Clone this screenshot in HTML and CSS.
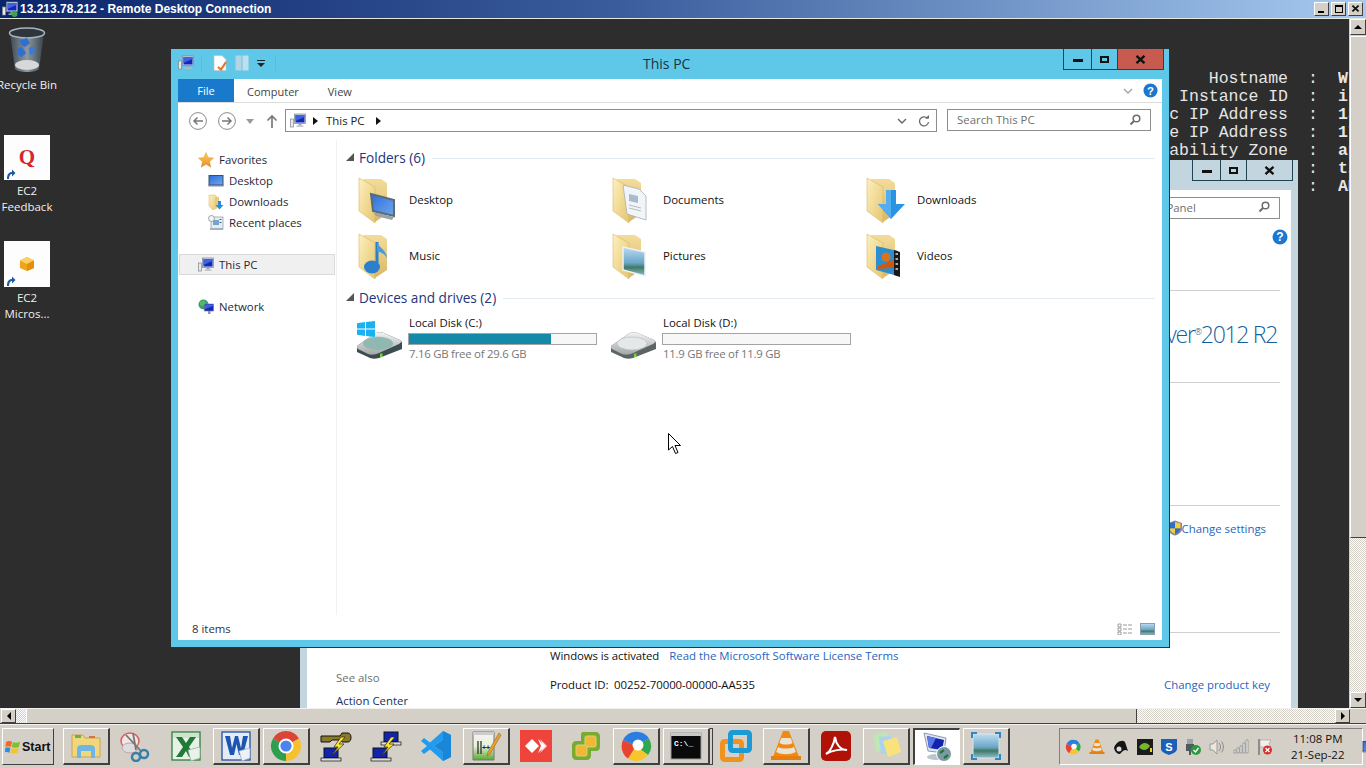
FILE: index.html
```html
<!DOCTYPE html>
<html lang="en">
<head>
<meta charset="utf-8">
<title>13.213.78.212 - Remote Desktop Connection</title>
<link rel="stylesheet" href="styles.css">
</head>
<body>
<svg class="defs" width="0" height="0" aria-hidden="true">
  <defs>
    <linearGradient id="gFlap" x1="0" y1="0" x2="1" y2="1"><stop offset="0" stop-color="#fdf0bd"/><stop offset="1" stop-color="#e6c56f"/></linearGradient>
    <linearGradient id="gBack" x1="0" y1="0" x2="0" y2="1"><stop offset="0" stop-color="#f3dc9b"/><stop offset="1" stop-color="#d9b867"/></linearGradient>
    <linearGradient id="gScreen" x1="0" y1="0" x2="1" y2="1"><stop offset="0" stop-color="#2d6fd8"/><stop offset="1" stop-color="#6ea6ee"/></linearGradient>
    <linearGradient id="gStar" x1="0" y1="0" x2="0" y2="1"><stop offset="0" stop-color="#fbd35d"/><stop offset="1" stop-color="#ec8a22"/></linearGradient>
    <linearGradient id="gBin" x1="0" y1="0" x2="1" y2="0"><stop offset="0" stop-color="#3f4a54"/><stop offset=".5" stop-color="#8c98a2"/><stop offset="1" stop-color="#39424a"/></linearGradient>
    <linearGradient id="gDisk" x1="0" y1="0" x2="0" y2="1"><stop offset="0" stop-color="#f2f4f4"/><stop offset="1" stop-color="#a2a8a8"/></linearGradient>
    <linearGradient id="gPic" x1="0" y1="0" x2="0" y2="1"><stop offset="0" stop-color="#bcdcf2"/><stop offset=".55" stop-color="#6aa7c8"/><stop offset=".7" stop-color="#3f7a62"/><stop offset="1" stop-color="#8fc0d8"/></linearGradient>
    <linearGradient id="gNpp" x1="0" y1="0" x2="0" y2="1"><stop offset="0" stop-color="#f4f4f4"/><stop offset=".5" stop-color="#e8f0d8"/><stop offset="1" stop-color="#58a82e"/></linearGradient>

    <symbol id="x-mark" viewBox="0 0 11 9"><path d="M1.500 .8L9.500 8.200M9.500 .8L1.500 8.200" stroke="#111" stroke-width="2.300" fill="none"/></symbol>

    <symbol id="folder" viewBox="0 0 48 48">
      <path d="M8 3H26L32 7V38L20 46Z" fill="url(#gBack)"/>
      <path d="M4 2L20 11V47L4 35Z" fill="url(#gFlap)" stroke="#d8b865" stroke-width=".6"/>
    </symbol>

    <symbol id="pc" viewBox="0 0 16 16">
      <rect x=".5" y="6" width="3" height="8" fill="#e8e8e8" stroke="#7d8790" stroke-width=".7"/>
      <rect x="4.5" y="1" width="11" height="9.5" fill="#d4dce8" stroke="#75839a" stroke-width=".7"/>
      <rect x="5.5" y="2" width="9" height="7.5" fill="#1427b8"/>
      <path d="M5.5 2H14.5V4L5.5 8Z" fill="#3f63e0"/>
      <rect x="8.5" y="10.5" width="3" height="2" fill="#9aa4ae"/>
      <rect x="6.5" y="12.5" width="7" height="1.3" fill="#b6bec6"/>
    </symbol>

    <symbol id="star" viewBox="0 0 16 16"><path d="M8 .5L10.2 5.6L15.6 6.1L11.5 9.7L12.8 15.2L8 12.3L3.2 15.2L4.5 9.7L.4 6.1L5.8 5.6Z" fill="url(#gStar)" stroke="#d98a2a" stroke-width=".4"/></symbol>

    <symbol id="monitor" viewBox="0 0 16 16"><rect x=".5" y="2" width="15" height="11" fill="#3a4e6a"/><rect x="1.5" y="3" width="13" height="8.5" fill="url(#gScreen)"/><rect x=".5" y="12" width="15" height="1.5" fill="#7e8a98"/></symbol>

    <symbol id="dl16" viewBox="0 0 16 16"><path d="M1 1H7L9 3V14L5 16L1 12Z" fill="url(#gFlap)" stroke="#d8b865" stroke-width=".5"/><path d="M7 3H11V13H7Z" fill="#e3c983"/><path d="M10 7H13V11H15.5L11.5 15.5L7.5 11H10Z" fill="#2a8bdc"/></symbol>

    <symbol id="recent" viewBox="0 0 16 16"><rect x="3" y="2" width="12" height="12" fill="#e6edf2" stroke="#8898a4" stroke-width=".7"/><rect x="5" y="5" width="6" height="5" fill="#72a5c8"/><rect x="11.5" y="4" width="2" height="1" fill="#48668a"/><rect x="11.5" y="7" width="2" height="1" fill="#48668a"/><rect x="2" y="13" width="13" height="2" fill="#a8b0b8"/><circle cx="3.5" cy="3.5" r="3" fill="#f4f4f4" stroke="#77848e" stroke-width=".7"/></symbol>

    <symbol id="network" viewBox="0 0 16 16"><circle cx="5.5" cy="5.5" r="5" fill="#2f9e8c"/><path d="M2 3L6 1.5L8 4L5 7L2 6Z" fill="#63b84e"/><rect x="6.5" y="5" width="9" height="7" fill="#1427b8" stroke="#778" stroke-width=".6"/><path d="M7 5.5H15V7L7 10Z" fill="#3f63e0"/><rect x="10" y="12" width="2.5" height="3" fill="#8c98a4"/></symbol>

    <symbol id="disk" viewBox="0 0 48 30">
      <path d="M2 17L19 5C22 3 26 3 29 4L45 11C47 12 47 14 47 16V20L24 29C20 30 16 30 13 28L2 23Z" fill="#5e6466"/>
      <path d="M2 17L19 5C22 3 26 3 29 4L45 11C47 12 46 14 44 15L24 24C20 26 16 26 13 25L3 20C2 19 2 18 2 17Z" fill="url(#gDisk)"/>
      <ellipse cx="23" cy="14.5" rx="15" ry="6.500" fill="#e4e8e8" stroke="#b4baba" stroke-width=".6"/>
      <rect x="25" y="24.500" width="2.500" height="3.500" fill="#78d23c"/>
    </symbol>
    <symbol id="disk-c" viewBox="0 0 48 30">
      <path d="M2 17L19 5C22 3 26 3 29 4L45 11C47 12 47 14 47 16V20L24 29C20 30 16 30 13 28L2 23Z" fill="#3c4c50"/>
      <path d="M2 17L19 5C22 3 26 3 29 4L45 11C47 12 46 14 44 15L24 24C20 26 16 26 13 25L3 20C2 19 2 18 2 17Z" fill="url(#gDisk)"/>
      <ellipse cx="23" cy="14.5" rx="15" ry="6.500" fill="#8fb8b0" stroke="#a8b4b0" stroke-width=".6"/>
      <rect x="25" y="24.500" width="2.500" height="3.500" fill="#78d23c"/>
    </symbol>

    <symbol id="flag" viewBox="0 0 18 18"><path d="M1 4C3 2 5 2 8 3L6.5 9C4 8 2.5 8 .5 9Z" fill="#ef6a2a"/><path d="M9 3.5C11 4.5 14 4.5 17 3L15.5 9C13 10 10 10 7.5 9Z" fill="#7cc12e"/><path d="M.3 10C2 9 4 9 6 10L5 15.5C3 14.5 1 14.5 0 15Z" fill="#2a8fe0"/><path d="M7 10C10 11 13 11 15.3 10L14 15.5C11 16.5 8 16.5 6 15.8Z" fill="#f5c32c"/></symbol>

    <symbol id="excel" viewBox="0 0 32 32"><rect x="2" y="2" width="28" height="28" fill="#e6f2e6" stroke="#2f7d3f" stroke-width="1.3"/><rect x="3" y="3" width="26" height="5" fill="#cfe4cf"/><path d="M6 7H12L16 13L20 7H26L19 17L25 27H19L16 21L12 27H6L13 17Z" fill="#1f7a35"/><path d="M18 20L30 17V28L21 31Z" fill="#e8f2ea" stroke="#89ad90" stroke-width=".7"/></symbol>
    <symbol id="word" viewBox="0 0 32 32"><rect x="2" y="2" width="28" height="28" fill="#e4ecf8" stroke="#25509e" stroke-width="1.3"/><path d="M5 6H10L12 18L15 6H18L21 18L23 6H28L23 25H19L16.5 14L14 25H10Z" fill="#1d56b0"/><path d="M19 21L30 18V28L22 31Z" fill="#eef2f8" stroke="#8ea2c4" stroke-width=".7"/></symbol>
    <symbol id="chrome" viewBox="0 0 32 32"><path d="M16 16L3 8.5A15 15 0 0 1 29 8.5Z" fill="#db4437"/><path d="M16 16L29 8.5A15 15 0 0 1 16 31Z" fill="#f6c02e"/><path d="M16 16L16 31A15 15 0 0 1 3 8.5Z" fill="#2f9e4f"/><circle cx="16" cy="16" r="7.5" fill="#fff"/><circle cx="16" cy="16" r="5.6" fill="#4a84ec"/></symbol>
    <symbol id="ring" viewBox="0 0 32 32"><path d="M16 16L3 10A15 15 0 0 1 29 8.5Z" fill="#2a7de1"/><path d="M16 16L29 8.5A15 15 0 0 1 28 25Z" fill="#2fa84f"/><path d="M16 16L28 25A15 15 0 0 1 8 28.5Z" fill="#f7c52c"/><path d="M16 16L8 28.5A15 15 0 0 1 3 10Z" fill="#e8432f"/><circle cx="18" cy="15" r="5.500" fill="#fff"/></symbol>
    <symbol id="vscode" viewBox="0 0 32 32"><path fill-rule="evenodd" d="M23 1L31 5V27L23 31L10 19.5L4 24L1 21L7 16L1 11L4 8L10 12.5ZM23 9.5L14 16L23 22.5Z" fill="#1f9cf0"/><path d="M23 1V9.5L14 16L23 22.5V31L31 27V5Z" fill="#1a86d8"/></symbol>
    <symbol id="anydesk" viewBox="0 0 32 32"><rect width="32" height="32" fill="#ef443b"/><path d="M12 9L19 16L12 23L5 16Z" fill="#fff"/><path d="M18 9L25 16L18 23L21 16Z" fill="#fff"/><path d="M20 9L27 16L20 23L23.5 16Z" fill="#fff" opacity=".85"/></symbol>
    <symbol id="vsphere" viewBox="0 0 32 32"><path d="M13 2H26C28 2 30 4 30 6V17C30 20 28 21 26 21H21V26C21 28 19 30 17 30H6C4 30 2 28 2 26V15C2 13 4 11 6 11H11V6C11 4 11 2 13 2Z" fill="#7bab2e"/><rect x="15" y="6" width="11" height="11" rx="1.5" fill="#f2b632" stroke="#c2d98a"/><rect x="6" y="15" width="11" height="11" rx="1.5" fill="#f2b632" stroke="#c2d98a"/></symbol>
    <symbol id="vmware" viewBox="0 0 32 32"><rect x="2.5" y="11.5" width="19" height="18" rx="2" fill="none" stroke="#f0921e" stroke-width="5"/><rect x="10.5" y="2.5" width="19" height="18" rx="2" fill="none" stroke="#1b9ad6" stroke-width="5"/></symbol>
    <symbol id="vlc" viewBox="0 0 32 32"><path d="M13 1H19L29 27H3Z" fill="#f08a12"/><path d="M11.2 8H20.8L22.5 13C19 15 13 15 9.5 13Z" fill="#e8e4dc"/><path d="M8 17C12 19 20 19 24 17L25.8 22C20 25 12 25 6.200 22Z" fill="#e8e4dc"/><path d="M1 26H31V30H1Z" fill="#e87f0c"/></symbol>
    <symbol id="acrobat" viewBox="0 0 32 32"><rect x="1" y="1" width="30" height="30" rx="5" fill="#b11207"/><path d="M6 24C10 22 14 14 15 7C16 14 20 20 27 20C22 19 12 20 6 24Z" fill="none" stroke="#fff" stroke-width="2"/></symbol>
    <symbol id="sticky" viewBox="0 0 32 32"><path d="M3 5L17 2L19 20L6 22Z" fill="#bfe6b5"/><path d="M9 7L21 6L22 24L11 24Z" fill="#a9d3f0"/><path d="M13 11L27 7L31 22L18 27Z" fill="#f9e27c"/></symbol>
    <symbol id="rdp" viewBox="0 0 32 32"><path d="M3 2L25 7L23 22L7 20Z" fill="#dfe6f0" stroke="#7485a0" stroke-width=".8"/><path d="M6 5L23 9L21 19L8 17Z" fill="#1024b0"/><path d="M6 5L15 7L10 17L8 17Z" fill="#5a78e6"/><ellipse cx="15" cy="26" rx="9" ry="3" fill="#bcc4cc"/><circle cx="23" cy="23" r="7.500" fill="#7d9aa4" stroke="#fff"/><path d="M19 22L23 19M27 24L23 27" stroke="#1f7a35" stroke-width="2.200"/></symbol>
    <symbol id="photos" viewBox="0 0 32 32"><rect x="3" y="4" width="26" height="24" fill="url(#gPic)" stroke="#d9e4ec"/><path d="M1 2H7V4H3V8H1ZM31 2H25V4H29V8H31ZM1 30H7V28H3V24H1ZM31 30H25V28H29V24H31Z" fill="#2e86c4"/></symbol>
    <symbol id="shield" viewBox="0 0 16 16"><path d="M8 .5L15 3V9C15 12 11 15 8 15.500C5 15 1 12 1 9V3Z" fill="#7f8a94"/><path d="M8 2V8.500H2.500V3.500Z" fill="#2b6fc8"/><path d="M8 2L13.500 3.500V8.500H8Z" fill="#f6cd3a"/><path d="M2.500 8.500H8V14C5 13 3 11 2.500 8.500Z" fill="#f6cd3a"/><path d="M8 8.500H13.500C13 11 11 13 8 14Z" fill="#2b6fc8"/></symbol>
    <symbol id="search" viewBox="0 0 12 12"><circle cx="7.500" cy="4.500" r="3.300" fill="none" stroke="#6d6d6d" stroke-width="1.500"/><path d="M5 7L1.500 10.500" stroke="#6d6d6d" stroke-width="2"/></symbol>
    <symbol id="help" viewBox="0 0 16 16"><circle cx="8" cy="8" r="7.500" fill="#1b77cf"/><text x="8" y="12.300" text-anchor="middle" class="help-mark">?</text></symbol>
  </defs>
</svg>

<header class="rdp-title">
  <svg class="i16" viewBox="0 0 16 16"><use href="#pc"/><circle cx="12.500" cy="13" r="3" fill="#3ba34a"/></svg>
  <span class="rdp-title-text">13.213.78.212 - Remote Desktop Connection</span>
  <div class="rdp-controls">
    <button class="classic-btn"><span class="g-min"></span></button>
    <button class="classic-btn"><span class="g-restore"></span></button>
    <button class="classic-btn"><svg class="x-sm" viewBox="0 0 11 9"><use href="#x-mark"/></svg></button>
  </div>
</header>

<div class="work">
  <main class="viewport">
    <section class="bginfo">
      <div class="bg-label">Hostname</div><div class="bg-colon">:</div><div class="bg-value">WIN-3</div>
      <div class="bg-label">Instance ID</div><div class="bg-colon">:</div><div class="bg-value">i-0a</div>
      <div class="bg-label">Public IP Address</div><div class="bg-colon">:</div><div class="bg-value">13.2</div>
      <div class="bg-label">Private IP Address</div><div class="bg-colon">:</div><div class="bg-value">172.</div>
      <div class="bg-label">Availability Zone</div><div class="bg-colon">:</div><div class="bg-value">ap-s</div>
      <div class="bg-label"></div><div class="bg-colon">:</div><div class="bg-value">t2.m</div>
      <div class="bg-label"></div><div class="bg-colon">:</div><div class="bg-value">AMD64</div>
    </section>

    <div class="desk-icon at-bin">
      <svg class="bin" viewBox="0 0 38 46"><path d="M2 6L7 42C10 46 28 46 31 42L36 6Z" fill="url(#gBin)"/><ellipse cx="19" cy="6" rx="17.500" ry="5" fill="#2e363d" stroke="#aab4bc" stroke-width="1.500"/><path d="M12 13L19 11L22 16L17 20L13 18Z" fill="#2f6fd0"/><path d="M9 22L14 20L18 26L14 30L10 28Z" fill="#2f6fd0"/><path d="M21 21L26 19L27 26L22 28Z" fill="#3a7ad8"/><ellipse cx="19" cy="38" rx="12" ry="5" fill="#d6d8da"/></svg>
      <span>Recycle Bin</span>
    </div>
    <div class="desk-icon at-feedback">
      <div class="tile short"><span class="q-mark">Q</span><svg class="shortcut" viewBox="0 0 12 12"><rect width="12" height="12" fill="#fff"/><path d="M3 11C3 6 5 4 8 4V1.500L11.500 5L8 8.500V6C6 6 5 8 5 11Z" fill="#1c5aa8"/></svg></div>
      <span>EC2<br>Feedback</span>
    </div>
    <div class="desk-icon at-micros">
      <div class="tile"><svg class="cube" viewBox="0 0 16 16"><path d="M8 1L15 4.500V12L8 15L1 12V4.500Z" fill="#f0a41c"/><path d="M1 4.500L8 8L15 4.500L8 1Z" fill="#fbd064"/><path d="M8 8V15L15 12V4.500Z" fill="#e58e10"/></svg><svg class="shortcut" viewBox="0 0 12 12"><rect width="12" height="12" fill="#fff"/><path d="M3 11C3 6 5 4 8 4V1.500L11.500 5L8 8.500V6C6 6 5 8 5 11Z" fill="#1c5aa8"/></svg></div>
      <span>EC2<br>Micros...</span>
    </div>

    <article class="win-back">
      <div class="back-title">
        <div class="win-ctl dim"><button class="ctl-min"><span class="g-min-lg"></span></button><button class="ctl-max"><span class="g-max-lg"></span></button><button class="ctl-close"><svg class="x-lg" viewBox="0 0 11 9"><use href="#x-mark"/></svg></button></div>
      </div>
      <div class="back-client">
        <aside class="back-side">
          <div class="see-also">See also</div>
          <div class="action">Action Center</div>
        </aside>
        <div class="back-main">
          <div class="back-sec s1">
            <div class="back-search"><span class="ghost">Search Control Panel</span><svg class="i12" viewBox="0 0 12 12"><use href="#search"/></svg></div>
            <svg class="help-back" viewBox="0 0 16 16"><use href="#help"/></svg>
          </div>
          <div class="back-sec s2"><span class="ws-logo">Windows Server<sup>&reg;</sup>2012 R2</span></div>
          <div class="back-sec s3"></div>
          <div class="back-sec s4">
            <div class="settings"><svg class="i16" viewBox="0 0 16 16"><use href="#shield"/></svg><a class="link">Change settings</a></div>
          </div>
          <div class="back-sec s5">
            <div class="act-row"><span class="act-text">Windows is activated</span><a class="link">Read the Microsoft Software License Terms</a></div>
            <div class="act-row2"><span class="act-text">Product ID:&nbsp; 00252-70000-00000-AA535</span><a class="link">Change product key</a></div>
          </div>
        </div>
      </div>
    </article>

    <article class="win-front">
      <div class="front-title">
        <div class="qat">
          <svg class="i16" viewBox="0 0 16 16"><use href="#pc"/></svg>
          <i class="qsep first"></i>
          <svg class="q-note" viewBox="0 0 14 16"><path d="M1 .5H9L13 4.500V15.500H1Z" fill="#fff" stroke="#b8c2c8" stroke-width=".7"/><path d="M5 12L8 14.500L13 7" fill="none" stroke="#e57230" stroke-width="2.200"/></svg>
          <svg class="q-pane" viewBox="0 0 14 16"><rect x=".5" y=".5" width="6" height="15" fill="#cfd9e4"/><rect x="7.500" y=".5" width="6" height="15" fill="#dfe7ee"/></svg>
          <svg class="q-drop" viewBox="0 0 8 7"><rect width="8" height="1" fill="#222"/><path d="M0 3H8L4 7Z" fill="#222"/></svg>
          <i class="qsep last"></i>
        </div>
        <div class="front-caption">This PC</div>
        <div class="win-ctl"><button class="ctl-min"><span class="g-min-lg"></span></button><button class="ctl-max"><span class="g-max-lg"></span></button><button class="ctl-close red"><svg class="x-lg" viewBox="0 0 11 9"><use href="#x-mark"/></svg></button></div>
      </div>

      <div class="front-client">
        <nav class="ribbon">
          <div class="tab-file">File</div>
          <div class="tab">Computer</div>
          <div class="tab view">View</div>
          <svg class="chev" viewBox="0 0 10 6"><path d="M1 1L5 5L9 1" fill="none" stroke="#a8a8a8" stroke-width="1.500"/></svg>
          <svg class="help-icon" viewBox="0 0 16 16"><use href="#help"/></svg>
        </nav>

        <div class="addr-row">
          <svg class="nav-circle" viewBox="0 0 18 18"><circle cx="9" cy="9" r="8.400" fill="none" stroke="#8a8a8a"/><path d="M14 9H5M8.500 5.500L5 9L8.500 12.500" fill="none" stroke="#777" stroke-width="1.500"/></svg>
          <svg class="nav-circle next" viewBox="0 0 18 18"><circle cx="9" cy="9" r="8.400" fill="none" stroke="#8a8a8a"/><path d="M4 9H13M9.500 5.500L13 9L9.500 12.500" fill="none" stroke="#777" stroke-width="1.500"/></svg>
          <svg class="nav-drop" viewBox="0 0 8 5"><path d="M0 0H8L4 5Z" fill="#9a9a9a"/></svg>
          <svg class="nav-up" viewBox="0 0 12 14"><path d="M6 14V2M1.500 6.500L6 2L10.500 6.500" fill="none" stroke="#7a7a7a" stroke-width="1.700"/></svg>
          <div class="addr">
            <svg class="i16" viewBox="0 0 16 16"><use href="#pc"/></svg>
            <svg class="crumb" viewBox="0 0 5 8"><path d="M0 0L5 4L0 8Z" fill="#111"/></svg>
            <span class="addr-text">This PC</span>
            <svg class="crumb" viewBox="0 0 5 8"><path d="M0 0L5 4L0 8Z" fill="#111"/></svg>
            <svg class="addr-chev" viewBox="0 0 10 6"><path d="M1 1L5 5L9 1" fill="none" stroke="#666" stroke-width="1.400"/></svg>
            <svg class="addr-refresh" viewBox="0 0 12 12"><path d="M9.500 3.500A4.500 4.500 0 1 0 10.500 7" fill="none" stroke="#6a6a6a" stroke-width="1.300"/><path d="M7 3.500H11V0Z" fill="#6a6a6a"/></svg>
          </div>
          <div class="search"><span class="ghost">Search This PC</span><svg class="i12" viewBox="0 0 12 12"><use href="#search"/></svg></div>
        </div>

        <div class="body">
          <aside class="side">
            <div class="s-row top"><svg class="i16" viewBox="0 0 16 16"><use href="#star"/></svg>Favorites</div>
            <div class="s-row sub"><svg class="i16" viewBox="0 0 16 16"><use href="#monitor"/></svg>Desktop</div>
            <div class="s-row sub"><svg class="i16" viewBox="0 0 16 16"><use href="#dl16"/></svg>Downloads</div>
            <div class="s-row sub"><svg class="i16" viewBox="0 0 16 16"><use href="#recent"/></svg>Recent places</div>
            <div class="s-row top sel"><svg class="i16" viewBox="0 0 16 16"><use href="#pc"/></svg>This PC</div>
            <div class="s-row top spaced"><svg class="i16" viewBox="0 0 16 16"><use href="#network"/></svg>Network</div>
          </aside>

          <section class="content">
            <h2 class="group"><svg class="tri" viewBox="0 0 8 8"><path d="M8 0V8H0Z" fill="#555"/></svg>Folders (6)<i class="rule"></i></h2>
            <div class="tiles">
              <div class="f-tile"><svg class="i48" viewBox="0 0 48 48"><use href="#folder"/><path d="M16 18L39 24V40L18 35Z" fill="url(#gScreen)" stroke="#5c6a74" stroke-width="2"/><path d="M18 36L39 41L37 44L21 40Z" fill="#9aa3aa"/></svg>Desktop</div>
              <div class="f-tile"><svg class="i48" viewBox="0 0 48 48"><use href="#folder"/><path d="M14 9L30 13L37 20V44L18 38Z" fill="#f2f5f8" stroke="#a6aeb6" stroke-width=".8"/><path d="M20 18L29 20V27L20 25Z" fill="#a8bccf"/><path d="M20 29L32 32M20 32L32 35" stroke="#b4bcc4"/></svg>Documents</div>
              <div class="f-tile"><svg class="i48" viewBox="0 0 48 48"><use href="#folder"/><path d="M23 14H33V28H42L28 43L15 28H23Z" fill="#2a93e4"/><path d="M23 14H28V43L15 28H23Z" fill="#52aef0"/></svg>Downloads</div>
              <div class="f-tile"><svg class="i48" viewBox="0 0 48 48"><use href="#folder"/><path d="M22 10V33" stroke="#2a80cc" stroke-width="3"/><path d="M22 10C24 16 32 18 32 27C31 22 26 21 22 19Z" fill="#4a9ade"/><ellipse cx="17" cy="35" rx="8" ry="6.500" fill="#2a80cc"/></svg>Music</div>
              <div class="f-tile"><svg class="i48" viewBox="0 0 48 48"><use href="#folder"/><path d="M14 15L36 20V44L14 38Z" fill="url(#gPic)" stroke="#eef2f4" stroke-width="1.500"/></svg>Pictures</div>
              <div class="f-tile"><svg class="i48" viewBox="0 0 48 48"><use href="#folder"/><path d="M13 14L35 19V44L13 38Z" fill="#2a8ed0"/><path d="M31 18L37 20V45L31 43Z" fill="#17181a"/><path d="M32.500 22H35M32.500 27H35M32.500 32H35M32.500 37H35" stroke="#ddd" stroke-width="1.500"/><circle cx="23" cy="25" r="4.500" fill="#d8721e"/><path d="M15 34L30 28V36L15 37Z" fill="#c85a14"/></svg>Videos</div>
            </div>
            <h2 class="group next"><svg class="tri" viewBox="0 0 8 8"><path d="M8 0V8H0Z" fill="#555"/></svg>Devices and drives (2)<i class="rule"></i></h2>
            <div class="drives">
              <div class="d-tile">
                <div class="d-icon"><svg class="win-logo" viewBox="0 0 18 16"><path d="M0 2.300L8 1V7.500H0ZM9 .9L18 0V7.500H9ZM0 8.500H8V15L0 13.700ZM9 8.500H18V16L9 15Z" fill="#19b2f0"/></svg><svg class="disk" viewBox="0 0 48 30"><use href="#disk-c"/></svg></div>
                <div class="d-info"><div class="d-name">Local Disk (C:)</div><div class="bar"><div class="bar-fill" style="width:76%"></div></div><div class="d-free">7.16 GB free of 29.6 GB</div></div>
              </div>
              <div class="d-tile">
                <div class="d-icon"><svg class="disk" viewBox="0 0 48 30"><use href="#disk"/></svg></div>
                <div class="d-info"><div class="d-name">Local Disk (D:)</div><div class="bar"></div><div class="d-free">11.9 GB free of 11.9 GB</div></div>
              </div>
            </div>
          </section>
        </div>

        <footer class="status">
          <span>8 items</span>
          <svg class="view-list" viewBox="0 0 16 12"><path d="M1 1H4V4H1ZM1 5H4V8H1ZM1 9H4V12H1Z" fill="none" stroke="#8a8a8a" stroke-width=".8"/><path d="M6 2H16M6 6H16M6 10H16" stroke="#9a9a9a" stroke-dasharray="4 1"/></svg>
          <svg class="view-large" viewBox="0 0 15 12"><rect x=".5" y=".5" width="14" height="11" fill="url(#gPic)" stroke="#8aa0b0"/></svg>
        </footer>
      </div>
    </article>

    <svg class="cursor" viewBox="0 0 13 21"><path d="M.5 .5V17L4.500 13.500L7.500 20.500L10 19.500L7 12.500H12.500Z" fill="#fff" stroke="#000"/></svg>
  </main>

  <div class="vbar">
    <div class="sb-btn"><span class="arrow-up"></span></div>
    <div class="vthumb"></div>
    <div class="sb-track"></div>
    <div class="sb-btn"><span class="arrow-down"></span></div>
  </div>
</div>

<div class="hbar">
  <div class="sb-btn h"><span class="arrow-left"></span></div>
  <div class="sb-track fixed"></div>
  <div class="hthumb"></div>
  <div class="sb-track grow"></div>
  <div class="sb-btn h"><span class="arrow-right"></span></div>
  <div class="corner"></div>
</div>

<footer class="taskbar">
  <button class="start"><svg class="i16" viewBox="0 0 18 18"><use href="#flag"/></svg>Start</button>
  <div class="apps">
    <div class="app raised"><svg class="i32" viewBox="0 0 32 32"><path d="M2 5H13L15 8H30V27H2Z" fill="#f0d77e" stroke="#c8a84a"/><rect x="5" y="5" width="6" height="3" fill="#6bb04a"/><rect x="19" y="6" width="6" height="2" fill="#d8704a"/><path d="M7 28V19C7 16 9 15 11 15H21C23 15 25 16 25 19V28H21V21H11V28Z" fill="#6fb6e4"/></svg></div>
    <div class="app"><svg class="i32" viewBox="0 0 32 32"><ellipse cx="10" cy="11" rx="9" ry="8" fill="#f0e6e2" stroke="#d8606a" stroke-width="1.500"/><ellipse cx="10" cy="18" rx="8" ry="5" fill="#ddd" stroke="#c8a0a8"/><path d="M6 5L21 21M13 3L16 20" stroke="#777" stroke-width="1.800"/><circle cx="24" cy="24" r="4" fill="none" stroke="#3a7ea8" stroke-width="2.500"/><circle cx="16" cy="27" r="4" fill="none" stroke="#3a7ea8" stroke-width="2.500"/></svg></div>
    <div class="app"><svg class="i32" viewBox="0 0 32 32"><use href="#excel"/></svg></div>
    <div class="app raised"><svg class="i32" viewBox="0 0 32 32"><use href="#word"/></svg></div>
    <div class="app raised"><svg class="i32" viewBox="0 0 32 32"><use href="#chrome"/></svg></div>
    <div class="app"><svg class="i32" viewBox="0 0 32 32"><path d="M1 6H20L22 3H28C32 3 32 12 28 12H22L20 10H12L10 12H1Z" fill="#8a7a28" stroke="#111"/><rect x="4" y="18" width="14" height="10" fill="#1024b0" stroke="#111"/><rect x="1" y="28" width="20" height="3" fill="#ddd" stroke="#111" stroke-width=".7"/><path d="M21 7L14 17H18L11 26L24 14H19L25 7Z" fill="#ffe92a" stroke="#222" stroke-width=".7"/></svg></div>
    <div class="app"><svg class="i32" viewBox="0 0 32 32"><rect x="14" y="2" width="14" height="10" fill="#1024b0" stroke="#111"/><rect x="11" y="12" width="20" height="3" fill="#ddd" stroke="#111" stroke-width=".7"/><rect x="3" y="18" width="14" height="10" fill="#1024b0" stroke="#111"/><rect x="1" y="28" width="20" height="3" fill="#ddd" stroke="#111" stroke-width=".7"/><path d="M21 7L14 17H18L11 26L24 14H19L25 7Z" fill="#ffe92a" stroke="#222" stroke-width=".7"/></svg></div>
    <div class="app"><svg class="i32" viewBox="0 0 32 32"><use href="#vscode"/></svg></div>
    <div class="app raised"><svg class="i32" viewBox="0 0 32 32"><path d="M3 2H24V30H3Z" fill="url(#gNpp)" stroke="#777"/><path d="M3 2H24V5H3Z" fill="#ccc"/><path d="M8 11V24M11 11V24" stroke="#222" stroke-width="1.200"/><text x="12" y="20" class="npp-mark">++</text><path d="M29 3L31 5L20 24L17 26L18 22Z" fill="#eea02a" stroke="#8a6a20" stroke-width=".6"/></svg></div>
    <div class="app"><svg class="i32" viewBox="0 0 32 32"><use href="#anydesk"/></svg></div>
    <div class="app"><svg class="i32" viewBox="0 0 32 32"><use href="#vsphere"/></svg></div>
    <div class="app raised"><svg class="i32" viewBox="0 0 32 32"><use href="#ring"/></svg></div>
    <div class="app raised stacked"><svg class="i32" viewBox="0 0 32 32"><rect x="1" y="3" width="30" height="26" fill="#0a0a0a" stroke="#999"/><rect x="1" y="3" width="30" height="3" fill="#c8c8c8"/><text x="4" y="16" class="cmd-mark">C:\_</text></svg></div>
    <div class="app"><svg class="i32" viewBox="0 0 32 32"><use href="#vmware"/></svg></div>
    <div class="app raised"><svg class="i32" viewBox="0 0 32 32"><use href="#vlc"/></svg></div>
    <div class="app"><svg class="i32" viewBox="0 0 32 32"><use href="#acrobat"/></svg></div>
    <div class="app raised"><svg class="i32" viewBox="0 0 32 32"><use href="#sticky"/></svg></div>
    <div class="app active"><svg class="i32" viewBox="0 0 32 32"><use href="#rdp"/></svg></div>
    <div class="app raised"><svg class="i32" viewBox="0 0 32 32"><use href="#photos"/></svg></div>
  </div>
  <div class="tray">
    <svg class="i16" viewBox="0 0 32 32"><use href="#ring"/></svg>
    <svg class="i16" viewBox="0 0 32 32"><use href="#vlc"/></svg>
    <svg class="i16" viewBox="0 0 16 16"><path d="M1 9C3 3 9 0 12 3L15 12C11 9 9 13 7 15C4 15 2 13 1 9Z" fill="#151515"/><circle cx="6" cy="10" r="2.500" fill="#ddd"/></svg>
    <svg class="i16" viewBox="0 0 16 16"><rect width="16" height="16" fill="#1b1b1b"/><path d="M2 8C5 3 10 3 13 7C10 12 5 12 2 8Z" fill="#74b72a"/><rect x="13" y="9" width="2" height="4" fill="#f0d030"/></svg>
    <svg class="i16" viewBox="0 0 16 16"><path d="M0 0H16V10C16 13 11 15 8 16C5 15 0 13 0 10Z" fill="#1d5fb8"/><text x="8" y="11.500" text-anchor="middle" class="s-mark">S</text></svg>
    <svg class="i16" viewBox="0 0 16 16"><rect x="2" y="0" width="6" height="5" fill="#9aa4a8"/><rect x="1" y="5" width="8" height="7" fill="#4e5a5e"/><rect x="4" y="12" width="2" height="4" fill="#4e5a5e"/><circle cx="11" cy="11" r="5" fill="#2c9a3c"/><path d="M8.500 11L10.500 13L13.500 9" fill="none" stroke="#fff" stroke-width="1.300"/></svg>
    <svg class="i16" viewBox="0 0 16 16"><path d="M1 5H4L8 1V15L4 11H1Z" fill="#e9e6de" stroke="#8a8a8a" stroke-width=".8"/><path d="M10 4C12 6 12 10 10 12M12.500 2.500C15 5.500 15 10.500 12.500 13.500" fill="none" stroke="#8a8a8a"/></svg>
    <svg class="i16" viewBox="0 0 16 16"><path d="M1 11h2v3H1ZM4 9h2v5H4ZM7 7h2v7H7ZM10 4h2v10h-2ZM13 1h2v13h-2Z" fill="#eee" stroke="#777" stroke-width=".6"/></svg>
    <svg class="i16" viewBox="0 0 16 16"><path d="M2 0V16" stroke="#777" stroke-width="1.500"/><path d="M3 1H14L12 4.500L14 8H3Z" fill="#f2f0ea" stroke="#999" stroke-width=".6"/><circle cx="10.500" cy="11" r="4.500" fill="#d8302a"/><path d="M8.500 9L12.500 13M12.500 9L8.500 13" stroke="#fff" stroke-width="1.300"/></svg>
    <div class="clock"><div>11:08 PM</div><div>21-Sep-22</div></div>
    <svg class="show-desk" viewBox="0 0 16 16"><use href="#monitor"/></svg>
  </div>
</footer>
</body>
</html>
```
FILE: styles.css
```css
* { box-sizing: border-box; }
html, body { margin: 0; padding: 0; }
body {
  width: 1366px; height: 768px; overflow: hidden;
  display: flex; flex-direction: column;
  background: #d4d0c8;
  font-family: "Open Sans", "Noto Sans", sans-serif;
  font-size: 11.4px; color: #111;
}
.defs { position: absolute; }
button { font: inherit; padding: 0; margin: 0; border: 0; background: none; color: inherit; }
svg { display: block; flex: none; }
.i12 { width: 12px; height: 12px; }
.i16 { width: 16px; height: 16px; }
.i32 { width: 32px; height: 32px; }
.i48 { width: 48px; height: 48px; }
.x-sm { width: 9px; height: 7px; }
.x-lg { width: 11px; height: 9px; }
.help-mark { font: bold 12px "Liberation Sans", sans-serif; fill: #fff; }
.npp-mark { font: bold 7px "Liberation Sans", sans-serif; fill: #222; }
.cmd-mark { font: bold 8px "Liberation Mono", monospace; fill: #fff; }
.s-mark { font: bold 11px "Liberation Sans", sans-serif; fill: #fff; }

/* RDP title */
.rdp-title {
  height: 19px; flex: none;
  display: flex; align-items: center;
  padding: 0 3px 1px 2px;
  border-bottom: 1px solid #e8e6e0;
  background: linear-gradient(90deg, #0a246a, #3a5c9c 45%, #a6caf0);
}
.rdp-title-text {
  margin-left: 2px;
  font: bold 12px "Liberation Sans", sans-serif;
  color: #fff;
}
.rdp-controls { margin-left: auto; display: flex; gap: 2px; }
.classic-btn {
  width: 15px; height: 14px;
  background: #d4d0c8;
  border: 1px solid; border-color: #fff #404040 #404040 #fff;
  display: flex; align-items: center; justify-content: center;
  color: #000;
}
.g-min { width: 6px; height: 2px; background: #000; margin-top: 7px; margin-right: 2px; }
.g-restore { width: 8px; height: 8px; border: 1px solid #000; border-top-width: 2px; }

/* workspace */
.work { flex: 1; display: flex; min-height: 0; }
.viewport {
  width: 1349px; position: relative; overflow: hidden;
  background: #2d2d2d;
}
.vbar { flex: 1; display: flex; flex-direction: column; padding-left: 1px; background: #d4d0c8; }
.sb-btn {
  flex: none; height: 16px;
  background: #d4d0c8;
  border: 1px solid; border-color: #fff #404040 #404040 #fff;
  display: flex; align-items: center; justify-content: center;
}
.sb-btn.h { width: 15px; height: 14px; }
.arrow-up { border: 4px solid transparent; border-top: 0; border-bottom: 4px solid #000; }
.arrow-down { border: 4px solid transparent; border-bottom: 0; border-top: 4px solid #000; }
.arrow-left { border: 4px solid transparent; border-left: 0; border-right: 4px solid #000; }
.arrow-right { border: 4px solid transparent; border-right: 0; border-left: 4px solid #000; }
.vthumb {
  flex: none; height: 502px; margin-top: 1px;
  background: #d4d0c8;
  border-top: 1px solid #fff; border-left: 1px solid #fff;
  border-bottom: 1px solid #404040;
}
.sb-track {
  flex: 1;
  background: conic-gradient(#fff 25%, #d4d0c8 0 50%, #fff 0 75%, #d4d0c8 0) 0 0 / 2px 2px;
}
.hbar {
  flex: none; height: 16px;
  display: flex; align-items: center;
  border-top: 1px solid #f4f2ee;
  border-bottom: 1px solid #404040;
  background: #d4d0c8;
  padding-left: 1px;
}
.hbar .sb-track { align-self: stretch; }
.hbar .fixed { flex: none; width: 10px; }
.hbar .grow { flex: 1; }
.hthumb {
  flex: none; width: 1111px; align-self: stretch;
  background: #d4d0c8;
  border-right: 1px solid #404040;
  border-left: 1px solid #fff;
}
.corner { width: 16px; flex: none; }

/* bginfo */
.bginfo {
  position: absolute; left: 1000px; top: 51px; width: 349px;
  display: grid; grid-template-columns: 288px 50px 1fr;
  font: 16.5px/18px "Liberation Mono", monospace;
  color: #e6e6e6; overflow: hidden;
}
.bg-label { text-align: right; white-space: nowrap; }
.bg-colon { padding-left: 20px; }
.bg-value { font-weight: bold; white-space: nowrap; overflow: hidden; }

/* desktop icons */
.desk-icon {
  position: absolute; left: -10px; width: 74px;
  display: flex; flex-direction: column; align-items: center;
  color: #f0f0f0; text-align: center; line-height: 16px; font-size: 11.5px;
}
.at-bin { top: 8px; }
.at-feedback { top: 116px; }
.at-micros { top: 222px; }
.bin { width: 38px; height: 46px; margin-bottom: 4px; }
.tile {
  width: 46px; height: 46px; background: #fdfdfd; position: relative;
  display: flex; align-items: center; justify-content: center; margin-bottom: 3px;
}
.tile.short { height: 45px; }
.q-mark { font: bold 21px "Liberation Serif", serif; color: #d5262e; }
.cube { width: 16px; height: 16px; }
.shortcut { position: absolute; left: 0; bottom: 0; width: 12px; height: 12px; }

/* background window */
.win-back {
  position: absolute; left: 300px; top: 141px; width: 998px; height: 700px;
  background: #c3d5df; padding: 0 7px;
  display: flex; flex-direction: column;
}
.back-title { height: 30px; flex: none; display: flex; justify-content: flex-end; margin-right: -2px; }
.win-ctl { display: flex; height: 21px; }
.win-ctl button {
  height: 21px; border: 1px solid #1f4452; border-top: 0; border-right: 0;
  display: flex; align-items: center; justify-content: center;
}
.win-ctl button:last-child { border-right: 1px solid #1f4452; }
.ctl-min { width: 28px; }
.ctl-max { width: 26px; }
.ctl-close { width: 47px; }
.red { background: #c75b50 !important; }
.g-min-lg { width: 10px; height: 3px; background: #111; margin-top: 3px; }
.g-max-lg { width: 9px; height: 7px; border: 2px solid #111; }
.back-client { flex: 1; background: #fff; display: flex; }
.back-side { width: 243px; flex: none; padding: 480px 0 0 29px; }
.see-also { color: #6e6e6e; line-height: 16px; }
.action { color: #16305e; line-height: 16px; margin-top: 7px; }
.back-main { flex: 1; display: flex; flex-direction: column; padding-right: 11px; }
.back-sec { border-bottom: 1px solid #cfcfcf; display: flex; position: relative; }
.s1 { height: 101px; justify-content: flex-end; padding-top: 7px; }
.s2 { height: 92px; align-items: center; justify-content: flex-end; padding: 0 3px 6px 0; }
.s3 { height: 123px; }
.s4 { height: 127px; align-items: flex-start; justify-content: flex-end; padding: 14px 14px 0 0; }
.s5 { border: 0; display: block; padding-top: 15px; }
.back-search {
  width: 200px; height: 22px; border: 1px solid #8c8c8c;
  display: flex; align-items: center; justify-content: space-between; padding: 0 9px 2px 4px;
}
.search { padding-bottom: 1px; }
.help-back { position: absolute; right: -8px; top: 39px; width: 16px; height: 16px; }
.ghost { color: #6f6f6f; white-space: nowrap; }
.ws-logo { font: 300 23px "Open Sans", sans-serif; color: #135f9e; letter-spacing: -1.3px; white-space: nowrap; }
.ws-logo sup { font-size: 9px; vertical-align: 8px; line-height: 0; }
.settings { display: flex; align-items: center; }
.settings .i16 { margin-right: -1px; }
.link { color: #1e66bf; }
.act-row { display: flex; gap: 10px; line-height: 16px; }
.act-row2 { display: flex; justify-content: space-between; line-height: 16px; margin-top: 13px; padding-right: 10px; }
.act-text { color: #111; letter-spacing: -.08px; }

/* front window */
.win-front {
  position: absolute; left: 171px; top: 30px; width: 999px; height: 599px;
  background: #5fc8e8; padding: 0 7px 7px;
  display: flex; flex-direction: column;
  border-right: 1px solid #17394a; border-bottom: 1px solid #17394a;
}
.front-title { height: 30px; flex: none; display: flex; margin-right: -2px; }
.qat { width: 465px; flex: none; display: flex; align-items: center; height: 28px; }
.qsep { width: 1px; height: 15px; background: #8fa8b4; }
.qsep.first { margin: 0 11px 0 7px; }
.qsep.last { margin-left: 10px; }
.q-note { width: 14px; height: 16px; }
.q-pane { width: 14px; height: 16px; margin-left: 8px; opacity: .75; }
.q-drop { width: 8px; height: 7px; margin-left: 8px; }
.front-caption { font-size: 14px; line-height: 29px; color: #1c3442; }
.front-title .win-ctl { margin-left: auto; }
.front-client { flex: 1; background: #fff; display: flex; flex-direction: column; min-height: 0; }

.ribbon { height: 24px; flex: none; display: flex; align-items: center; border-bottom: 1px solid #dcdcdc; color: #444; font-size: 11px; }
.tab-file { width: 56px; height: 23px; background: #1979ca; color: #fff; text-align: center; line-height: 23px; }
.tab { margin-left: 13px; padding-top: 2px; }
.tab.view { margin-left: 29px; }
.chev { width: 10px; height: 6px; margin-left: auto; }
.help-icon { width: 15px; height: 15px; margin: 0 4px 0 10px; }

.addr-row { height: 37px; flex: none; display: flex; align-items: flex-start; padding: 6px 11px 0 11px; }
.nav-circle { width: 18px; height: 18px; margin-top: 3px; }
.nav-circle.next { margin-left: 11px; }
.nav-drop { width: 8px; height: 5px; margin: 10px 0 0 10px; }
.nav-up { width: 12px; height: 14px; margin: 5px 0 0 12px; }
.addr {
  margin-left: 7px; width: 652px; height: 23px;
  border: 1px solid #8c8c8c; display: flex; align-items: center; padding: 0 5px 0 4px;
  color: #222;
}
.crumb { width: 5px; height: 8px; margin-left: 7px; }
.addr-text { margin-left: 8px; width: 41px; white-space: nowrap; }
.addr-text + .crumb { margin-left: 9px; }
.addr-chev { width: 10px; height: 6px; margin-left: auto; }
.addr-refresh { width: 12px; height: 12px; margin: 0 1px 0 11px; }
.search {
  margin-left: 10px; width: 204px; height: 22px; border: 1px solid #8c8c8c;
  display: flex; align-items: center; justify-content: space-between; padding-left: 9px; padding-right: 9px;
}

.body { flex: 1; display: flex; min-height: 0; }
.side { width: 159px; flex: none; padding-top: 9px; border-right: 1px solid #f1f1f1; margin-bottom: 2px; }
.s-row { height: 21px; display: flex; align-items: center; color: #1e2a3a; white-space: nowrap; }
.s-row.top { padding-left: 20px; gap: 5px; }
.s-row.sub { padding-left: 30px; gap: 5px; }
.s-row.sel {
  margin: 21px 1px 0 1px; padding-left: 18px;
  background: #f0f0f0; border: 1px solid #dadada;
}
.s-row.spaced { margin-top: 21px; }

.content { flex: 1; padding: 7px 7px 0 9px; min-width: 0; }
.group {
  margin: 0; height: 20px; display: flex; align-items: center;
  font-size: 13.6px; font-weight: 400; color: #22367e; white-space: nowrap;
}
.group.next { margin-top: 3px; }
.tri { width: 8px; height: 8px; margin-right: 5px; }
.rule { flex: 1; height: 1px; background: #e2ebf2; margin: 2px 0 0 7px; }
.tiles { display: grid; grid-template-columns: repeat(3, 254px); margin: 5px 0 0 9px; grid-auto-rows: 56px; }
.f-tile { display: flex; align-items: center; gap: 6px; color: #111; padding-bottom: 2px; }
.f-tile .i48 { margin-top: 2px; }
.drives { display: grid; grid-template-columns: repeat(3, 254px); margin: 8px 0 0 9px; }
.d-tile { display: flex; gap: 6px; }
.d-icon { width: 48px; height: 48px; position: relative; flex: none; }
.disk { position: absolute; left: 0; top: 14px; width: 48px; height: 30px; }
.win-logo { position: absolute; left: 2px; top: 6px; width: 18px; height: 16px; z-index: 1; }
.d-name { line-height: 16px; color: #111; }
.bar { width: 189px; height: 12px; margin-top: 2px; border: 1px solid #a4a4a4; background: #f7f7f7; margin-left: -1px; }
.bar-fill { height: 100%; background: #148aa8; }
.d-free { line-height: 16px; color: #777; letter-spacing: -.25px; margin-top: 1px; }

.status { height: 23px; flex: none; display: flex; align-items: center; padding: 0 7px 0 14px; color: #333; }
.view-list { width: 16px; height: 12px; margin-left: auto; }
.view-large { width: 15px; height: 12px; margin-left: 7px; }

.cursor { position: absolute; left: 668px; top: 414px; width: 13px; height: 21px; }

/* taskbar */
.taskbar {
  flex: none; height: 44px; display: flex; align-items: flex-start;
  border-top: 1px solid #f4f2ee;
  padding: 3px 3px 0 2px;
  background: #d4d0c8;
}
.start {
  width: 52px; height: 37px; flex: none;
  display: flex; align-items: center; gap: 1px; padding-left: 2px;
  font: bold 12.5px "Liberation Sans", sans-serif;
  background: #d4d0c8;
  border: 1px solid; border-color: #fff #404040 #404040 #fff;
}
.apps { display: flex; gap: 3px; margin-left: 9px; }
.app {
  width: 47px; height: 37px; flex: none; display: flex; align-items: center; justify-content: center;
  border: 1px solid transparent; border-right-width: 2px; border-bottom-width: 2px;
}
.app.raised { border-color: #fff #404040 #404040 #fff; }
.app.stacked { box-shadow: 3px 0 0 -1px #d4d0c8, 3px 0 0 0 #404040; }
.app.active {
  background: #fff; border-color: #404040 #fff #fff #404040;
  border-width: 2px 1px 1px 2px;
}
.tray {
  margin-left: auto; width: 304px; height: 37px; flex: none;
  border: 1px solid; border-color: #808080 #fff #fff #808080;
  display: flex; align-items: center; gap: 8px; padding-left: 5px; color: #222;
}
.clock { width: 62px; margin-left: 10px; text-align: center; line-height: 16px; font-size: 11.5px; color: #111; white-space: nowrap; }
.show-desk { width: 16px; height: 16px; margin-left: 9px; }
```
